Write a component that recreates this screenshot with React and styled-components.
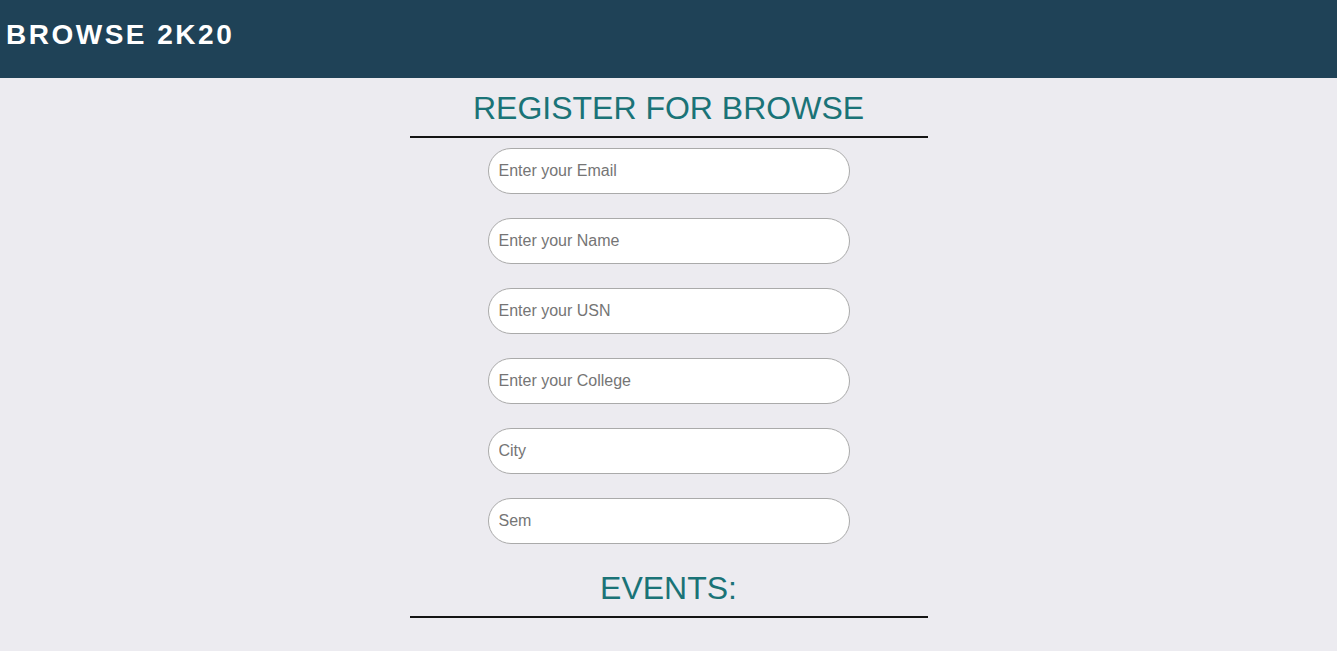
import React from 'react'
import styled, { createGlobalStyle } from 'styled-components'

const GlobalStyle = createGlobalStyle`
  body {
    margin: 0;
    background-color: #ecebf0;
    font-family: "Liberation Sans", Arial, sans-serif;
  }
`

const Header = styled.header`
  height: 78px;
  box-sizing: border-box;
  padding: 19px 6px 0;
  background-color: #1f4257;
`

const Brand = styled.h2`
  margin: 0;
  color: #fff;
  font-size: 28px;
  font-weight: bold;
  letter-spacing: 2.5px;
`

const Main = styled.main`
  width: 518px;
  margin: 0 auto;
  display: flex;
  flex-direction: column;
  align-items: center;
`

const Title = styled.h1`
  align-self: stretch;
  margin: ${(p) => p.$top}px 0 0;
  padding-bottom: 9px;
  border-bottom: 2px solid #141414;
  color: #1a7377;
  font-size: 32px;
  font-weight: normal;
  text-align: center;
`

const Form = styled.form`
  display: flex;
  flex-direction: column;
  gap: 24px;
  margin-top: 10px;
`

const Field = styled.input`
  width: 362px;
  height: 46px;
  box-sizing: border-box;
  padding: 0 10px;
  border: 1px solid #aaa;
  border-radius: 23px;
  background: #fff;
  font-family: "Liberation Sans", Arial, sans-serif;
  font-size: 16px;
  outline: none;

  &::placeholder {
    color: #757575;
  }
`

const fields = [
  'Enter your Email',
  'Enter your Name',
  'Enter your USN',
  'Enter your College',
  'City',
  'Sem',
]

const App = () => {
  return (
    <>
      <GlobalStyle />
      <Header>
        <Brand>BROWSE 2K20</Brand>
      </Header>
      <Main>
        <Title $top={12}>REGISTER FOR BROWSE</Title>
        <Form>
          {fields.map((f) => (
            <Field key={f} type="text" placeholder={f} />
          ))}
        </Form>
        <Title $top={26}>EVENTS:</Title>
      </Main>
    </>
  )
}

export default App
